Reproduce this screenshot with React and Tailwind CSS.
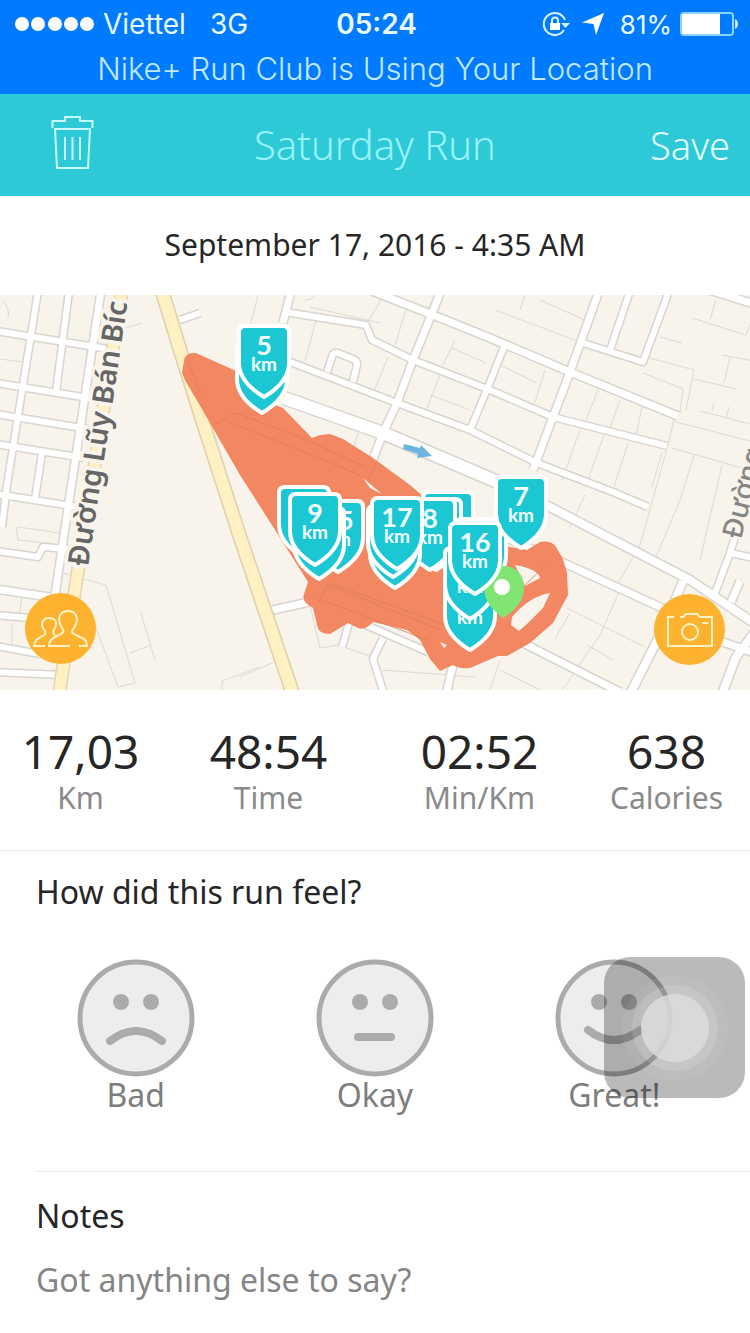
import React, { useState } from "react";

const TEXT_FONT = "font-['Noto_Sans','Open_Sans',sans-serif]";

const whiteRoads = [
    // blocks on the west side
    { d: "M38,-4 L7,190 L2,232", w: 6 },
    { d: "M69,-4 L56,97", w: 6 },
    { d: "M101,-4 L70,200 L55,300", w: 7 },
    { d: "M42,158 L35,204", w: 6 },
    { d: "M-4,36 L108,54", w: 6 },
    { d: "M-4,88 L95,104", w: 6 },
    { d: "M-4,119 L88,134", w: 6 },
    { d: "M-4,149 L84,163", w: 6 },
    { d: "M-4,199 L78,212", w: 6 },
    { d: "M-4,256 L38,262 L43,252 L68,254", w: 6 },
    { d: "M-4,294 L56,303", w: 7 },
    { d: "M-4,320 L40,324", w: 6 },
    { d: "M-4,351 L40,359", w: 6 },
    { d: "M-4,377 L62,380", w: 6 },
    // centre
    { d: "M180,25 L200,18", w: 6 },
    { d: "M291,-4 L283,28", w: 7 },
    { d: "M285,17 L366,30 L372,45 L413,65 L490,95 L553,122 L667,151", w: 6 },
    { d: "M372,-4 L433,20 L490,43 L570,77 L678,121", w: 7 },
    { d: "M441,-4 L413,65 L397,108 L383,138 L370,172", w: 7 },
    { d: "M285,65 L397,108 L470,135 L537,168 L613,197 L648,212", w: 6 },
    { d: "M327,77 L333,59 Q335,57 338,58 L353,64 Q358,66 357,70 L353,87", w: 6 },
    { d: "M504,52 L488,92 L470,135", w: 6 },
    { d: "M599,-4 L570,77 L553,122 L533,175", w: 7 },
    { d: "M630,-4 L610,55", w: 6 },
    { d: "M669,-4 L643,67 L583,48", w: 6 },
    { d: "M706,-6 L754,9", w: 7 },
    { d: "M284,103 L383,138 L500,188", w: 12 },
    { d: "M500,188 L550,212 L690,285 L754,328", w: 8 },
    // east side
    { d: "M500,240 L553,263 L660,312 L723,347 L754,358", w: 7 },
    { d: "M500,338 L527,350 L620,397", w: 7 },
    { d: "M683,286 L665,330 L630,399", w: 8 },
    { d: "M715,298 L730,258 L754,263 M730,258 L738,232", w: 6 },
    { d: "M740,286 L731,307", w: 7 },
    { d: "M754,338 L736,362 L722,399", w: 8 },
    // south side
    { d: "M273,315 L309,307", w: 7 },
    { d: "M349,328 L342,352", w: 6 },
    { d: "M366,330 L428,357", w: 6 },
    { d: "M383,343 L373,364 L384,399", w: 6 },
    { d: "M453,370 L446,399", w: 7 },
];

const parcelLines = [
    "M0,64 L22,67 M3,5 Q10,14 8,22 M125,33 L142,28",
    "M16,232 L18,245 L54,249 M18,232 L60,238 M62,278 L106,290 L135,388 L118,392 L92,322",
    "M141,318 L155,365 M130,358 L151,350 M222,395 L222,386 L260,372 M12,328 L12,350 M22,300 L20,318",
    "M258,0 L250,32 M305,5 Q314,5 315,-2 M310,12 L380,28 M316,25 L305,66 M382,3 L365,32 M406,15 L395,50",
    "M388,62 L374,96 M358,138 L352,160 M440,20 L492,42 M455,45 L443,70 M452,53 L486,68 M440,80 L425,118 M430,100 L470,115",
    "M495,15 L580,47 M540,5 L585,25 M520,15 L525,0 M500,70 L537,88 M545,75 L535,107 M598,95 L584,130 M620,105 L608,138 M642,112 L635,146",
    "M692,23 L746,40 L754,20 M716,5 L710,25 M660,42 L682,48 M650,63 L694,75 L686,115 M643,78 L683,94 L680,118 M694,84 L736,94",
    "M722,60 L754,66 M730,62 L724,88 M700,116 L754,130 M712,116 L714,108 M726,123 L729,112 M676,127 L750,146 M674,125 L668,150 L640,250 L617,290",
    "M580,135 L562,185 M604,140 L588,185 M628,148 L614,192 M662,158 L652,192 M672,153 L742,173 M694,160 L680,205 L656,262 M722,170 L700,265",
    "M585,200 L570,232 M567,313 L645,352 M570,318 L555,344 M587,350 L613,365 M500,375 L540,395 M622,290 L600,340 L562,395",
    "M310,310 L320,353 L338,350 L372,362 M240,382 L272,368 M382,375 L475,382 M500,366 L490,395",
];

const runArea =
    "M184,66 Q185,57 196,58 L236,76 L262,105 L283,113 L312,143 L320,140 L330,139 L343,144 L373,163 L410,190 L450,225 L500,250 L527,255 L540,247 Q551,245 556,252 L563,264 L567,278 L568,300 L553,328 L530,348 L507,361 L498,361 L470,373 Q460,374 453,370 L440,376 L430,364 L420,345 L407,335 L373,327 Q365,336 358,333 L348,328 L330,339 Q318,339 317,330 L313,313 Q301,307 304,299 L308,287 L277,238 L240,180 L210,128 L185,85 L182,78 Z " +
    "M515,270 Q538,274 540,283 L525,291 Z " +
    "M550,298 Q530,301 512,322 L511,330 L519,336 L528,328 L543,313 Z " +
    "M363,183 L382,199 L370,193 Z M440,347 L447,350 L444,353 Z";

// drawn in order, so later pins cover earlier ones
const kmPins = [
    { x: 262, y: 47 },
    { x: 264, y: 31, value: "5", unit: "km" },
    { x: 338, y: 206, value: "15", unit: "km" },
    { x: 304, y: 192 },
    { x: 319, y: 213 },
    { x: 315, y: 199, value: "9", unit: "km" },
    { x: 448, y: 197 },
    { x: 436, y: 204 },
    { x: 430, y: 204, value: "8", unit: "km" },
    { x: 395, y: 222 },
    { x: 393, y: 211 },
    { x: 397, y: 203, value: "17", unit: "km" },
    { x: 481, y: 224 },
    { x: 521, y: 182, value: "7", unit: "km" },
    { x: 470, y: 284, unit: "km" },
    { x: 470, y: 253, unit: "km" },
];

const KmPin = ({ x, y, value, unit }) => (
    <g transform={`translate(${x} ${y})`}>
        <path
            d="M-19,0 H19 Q25,0 25,6 V37 C25,51 15,62 0,71 C-15,62 -25,51 -25,37 V6 Q-25,0 -19,0 Z"
            fill="#1cc7d4"
            stroke="#fff"
            strokeWidth="4"
            strokeLinejoin="round"
        />
        <g fill="#f2ffff" textAnchor="middle" className="font-['Lato',sans-serif] font-bold">
            {value && <text y="29" fontSize="27">{value}</text>}
            {unit && <text y="45" fontSize="19">{unit}</text>}
        </g>
    </g>
);

const RunMap = () => (
    <svg
        viewBox="0 0 750 395"
        preserveAspectRatio="xMidYMid slice"
        className="block w-full bg-[#f8f4ec]"
        role="img"
        aria-label="Route map"
    >
        <g fill="none" stroke="#dedad3" strokeWidth="1">
            {parcelLines.map((d) => (
                <path key={d} d={d} />
            ))}
        </g>
        <g fill="none" stroke="#d8d4d0" strokeLinejoin="round">
            {whiteRoads.map((road) => (
                <path key={road.d} d={road.d} strokeWidth={road.w + 3} />
            ))}
        </g>
        <g fill="none" stroke="#fff" strokeLinejoin="round">
            {whiteRoads.map((road) => (
                <path key={road.d} d={road.d} strokeWidth={road.w} />
            ))}
        </g>
        <g fill="none">
            <path d="M122,-4 L78,275 L59,399" stroke="#e6d3b0" strokeWidth="14" />
            <path d="M122,-4 L78,275 L59,399" stroke="#fdf1c4" strokeWidth="11" />
            <path d="M162,-4 L181,58 L207,140 L240,242 L293,399" stroke="#e3ceaa" strokeWidth="15" />
            <path d="M162,-4 L181,58 L207,140 L240,242 L293,399" stroke="#fdf1c4" strokeWidth="12" />
        </g>

        <path d={runArea} fill="#f38762" fillRule="evenodd" />
        <g fill="none" stroke="#dc7c5c" strokeWidth="1" opacity="0.8">
            <path d="M213,130 L236,118 L300,142 L365,172 M228,127 L275,145 L360,180 M188,67 L201,100" />
            <path d="M318,307 L328,290 L440,335 M322,305 L430,346 M330,288 L445,330 M376,168 L368,185 M525,290 L548,268" />
        </g>

        <path d="M404,149 L420,153 L421,150 L432,161 L417,163 L418,159 L403,154 Z" fill="#6db3e0" />

        <g className="font-['Noto_Sans',sans-serif]" strokeLinejoin="round" paintOrder="stroke" stroke="#f8f4ec">
            <text
                transform="translate(88 272) rotate(-81.500)"
                fontSize="29"
                fill="#666"
                strokeWidth="8"
                className="font-semibold"
            >
                Đường Lũy Bán Bíc
            </text>
            <text
                transform="translate(741 245) rotate(-76)"
                fontSize="28"
                fill="#858585"
                strokeWidth="5"
                className="font-medium"
            >
                Đường
            </text>
        </g>

        {kmPins.map((pin) => (
            <KmPin key={`${pin.x}-${pin.y}`} {...pin} />
        ))}
        <path d="M504,271 Q524,273 524,293 Q524,310 503,323 Q484,309 484,293 Q484,273 504,271 Z" fill="#80e573" />
        <KmPin x={475} y={228} value="16" unit="km" />
        <circle cx="502" cy="292" r="8" fill="#fff" />
    </svg>
);

const StatusBar = () => (
    <div className="bg-[#007aff] text-[#e8f8ff] font-['Inter',sans-serif]">
        <div className="grid grid-cols-[1fr_auto_1fr] items-center h-12 pl-[15px] pr-3 text-[28px]">
            <div className="flex items-center">
                <svg width="80" height="14" viewBox="0 0 80 14" fill="#fff" aria-hidden="true">
                    {[7, 23, 40, 56, 72].map((cx) => (
                        <circle key={cx} cx={cx} cy="7" r="7" />
                    ))}
                </svg>
                <span className="ml-2">Viettel</span>
                <span className="ml-6">3G</span>
            </div>
            <span className="font-semibold">05:24</span>
            <div className="flex items-center justify-end">
                <svg width="28" height="26" viewBox="0 0 28 26" fill="none" stroke="#d8f2ff" strokeWidth="2" aria-hidden="true">
                    <path d="M22,19 A11,11 0 1 1 23,9" />
                    <path d="M19,12 H28 L23.500,17 Z" fill="#d8f2ff" stroke="none" />
                    <rect x="8" y="12" width="10" height="7" fill="#fff" stroke="none" />
                    <path d="M10,12 V9.500 A3,3 0 0 1 16,9.500 V12" />
                </svg>
                <svg width="22" height="22" viewBox="0 0 22 22" fill="#fff" className="ml-3" aria-hidden="true">
                    <path d="M22,0 L14,22 L11.500,11 L0,9.500 Z" />
                </svg>
                <span className="ml-4 text-[26px]">81%</span>
                <svg width="58" height="24" viewBox="0 0 58 24" className="ml-2" aria-hidden="true">
                    <rect x="1" y="1" width="52" height="22" rx="3" fill="none" stroke="#8fd0ff" strokeWidth="2" />
                    <rect x="2" y="2" width="38" height="20" fill="#fff" />
                    <path d="M55,7 Q58,8 58,12 Q58,16 55,17 Z" fill="#c8ecff" />
                </svg>
            </div>
        </div>
        <p className="h-[46px] text-center text-[31px] leading-[42px] font-light text-[#c0e8ff]">
            Nike+ Run Club is Using Your Location
        </p>
    </div>
);

const Header = () => (
    <header className="grid grid-cols-[1fr_auto_1fr] items-center h-[102px] bg-[#2ec9d7] px-5">
        <button type="button" aria-label="Delete run" className="justify-self-start ml-[31px] -mt-1">
            <svg width="43" height="56" viewBox="0 0 43 56" fill="none" stroke="#c8fbfd" strokeWidth="2">
                <path d="M1.500,13 V6 H14 V2 H29 V6 H41.500 V13" />
                <path d="M4,14 H39 L37,53 H6 Z" />
                <path d="M14,22 V45 M21.500,22 V45 M29,22 V45" />
            </svg>
        </button>
        <h1 className="text-[40px] font-light text-[#98f2f8]">Saturday Run</h1>
        <button type="button" className="justify-self-end text-[38px] font-light text-[#e4ffff]">
            Save
        </button>
    </header>
);

const stats = [
    { value: "17,03", label: "Km" },
    { value: "48:54", label: "Time" },
    { value: "02:52", label: "Min/Km" },
    { value: "638", label: "Calories" },
];

const moods = [
    { id: "bad", label: "Bad", mouth: "M33,82 Q59,62 85,82" },
    { id: "okay", label: "Okay", mouth: "M42,78 H75" },
    { id: "great", label: "Great!", mouth: "M33,71 Q59,91 85,71" },
];

const App = () => {
    const [mood, setMood] = useState(null);
    const [notes, setNotes] = useState("");

    return (
        <div className={`relative w-full overflow-hidden bg-white text-[#262626] ${TEXT_FONT}`}>
            <StatusBar />
            <Header />

            <p className="h-[99px] text-center text-[30px] leading-[98px]">September 17, 2016 - 4:35 AM</p>

            <section className="relative">
                <RunMap />
                <button
                    type="button"
                    aria-label="Tag friends"
                    className="absolute left-[25px] bottom-[26px] size-[71px] rounded-full bg-[#fdb32f] flex items-center justify-center"
                >
                    <svg width="56" height="40" viewBox="0 0 56 40" fill="none" stroke="#fff3c4" strokeWidth="2">
                        <path d="M46,37 H54 Q54,30 47,28 L41,25 Q37,23 41,19 Q44,14 44,10 Q43,2 35,2 Q27,2 26,10 Q26,15 29,19 Q32,23 28,25 L22,28 Q16,31 16,37 H37" />
                        <path d="M12,37 H1 Q2,31 6,29 L11,26 Q14,24 11,21 Q9,18 9,15 Q10,9 16,9 Q22,9 23,14 Q23,18 21,21 Q19,24 22,26" />
                    </svg>
                </button>
                <button
                    type="button"
                    aria-label="Add photo"
                    className="absolute right-[25px] bottom-[25px] size-[71px] rounded-full bg-[#fdb32f] flex items-center justify-center"
                >
                    <svg width="48" height="36" viewBox="0 0 48 36" fill="none" stroke="#fff3c4" strokeWidth="2">
                        <path d="M8,5 H2 V34 H46 V5 H34 L31,2 H20 L17,5 H14" />
                        <circle cx="24" cy="20" r="8" />
                        <path d="M36,11 H42" />
                    </svg>
                </button>
            </section>

            <dl className="grid grid-cols-[161fr_215fr_207fr_167fr] h-[161px] pt-8 border-b border-gray-200 text-center">
                {stats.map((stat) => (
                    <div key={stat.label} className="flex flex-col-reverse justify-end">
                        <dt className="text-[30px] leading-9 text-[#8a8a8a]">{stat.label}</dt>
                        <dd className="text-[46px] leading-[58px]">{stat.value}</dd>
                    </div>
                ))}
            </dl>

            <fieldset className="pt-5">
                <legend className="float-left w-full pl-9 text-[32px] leading-[42px]">How did this run feel?</legend>
                <div className="clear-both grid grid-cols-3 px-4 pt-[46px] pb-[58px]">
                    {moods.map((item) => (
                        <label key={item.id} className="flex flex-col items-center cursor-pointer">
                            <input
                                type="radio"
                                name="mood"
                                value={item.id}
                                checked={mood === item.id}
                                onChange={() => setMood(item.id)}
                                className="sr-only"
                            />
                            <svg width="118" height="118" viewBox="0 0 118 118" aria-hidden="true">
                                <circle cx="59" cy="59" r="56" fill="#ededed" stroke="#ababab" strokeWidth="5" />
                                <circle cx="44" cy="43" r="8" fill="#ababab" />
                                <circle cx="74" cy="43" r="8" fill="#ababab" />
                                <path d={item.mouth} fill="none" stroke="#ababab" strokeWidth="8" strokeLinecap="round" />
                            </svg>
                            <span className="text-[32px] leading-9 text-[#7d7d7d]">{item.label}</span>
                        </label>
                    ))}
                </div>
            </fieldset>

            <section className="ml-9 border-t border-gray-200 pt-6">
                <label htmlFor="notes" className="block text-[32px] leading-10">
                    Notes
                </label>
                <textarea
                    id="notes"
                    rows={1}
                    value={notes}
                    onChange={(e) => setNotes(e.target.value)}
                    placeholder="Got anything else to say?"
                    className="mt-6 block w-full h-[70px] resize-none outline-none text-[32px] leading-10 placeholder:text-[#858585]"
                />
            </section>

            {/* floating assistive button */}
            <button
                type="button"
                aria-label="AssistiveTouch"
                className="absolute right-[5px] top-[957px] size-[141px] rounded-[26px] bg-black/27 flex items-center justify-center"
            >
                <span className="size-[106px] rounded-full bg-white/5 flex items-center justify-center">
                    <span className="size-[86px] rounded-full bg-white/15 flex items-center justify-center">
                        <span className="size-[68px] rounded-full bg-[#dcdcdc]/85" />
                    </span>
                </span>
            </button>
        </div>
    );
};

export default App;
